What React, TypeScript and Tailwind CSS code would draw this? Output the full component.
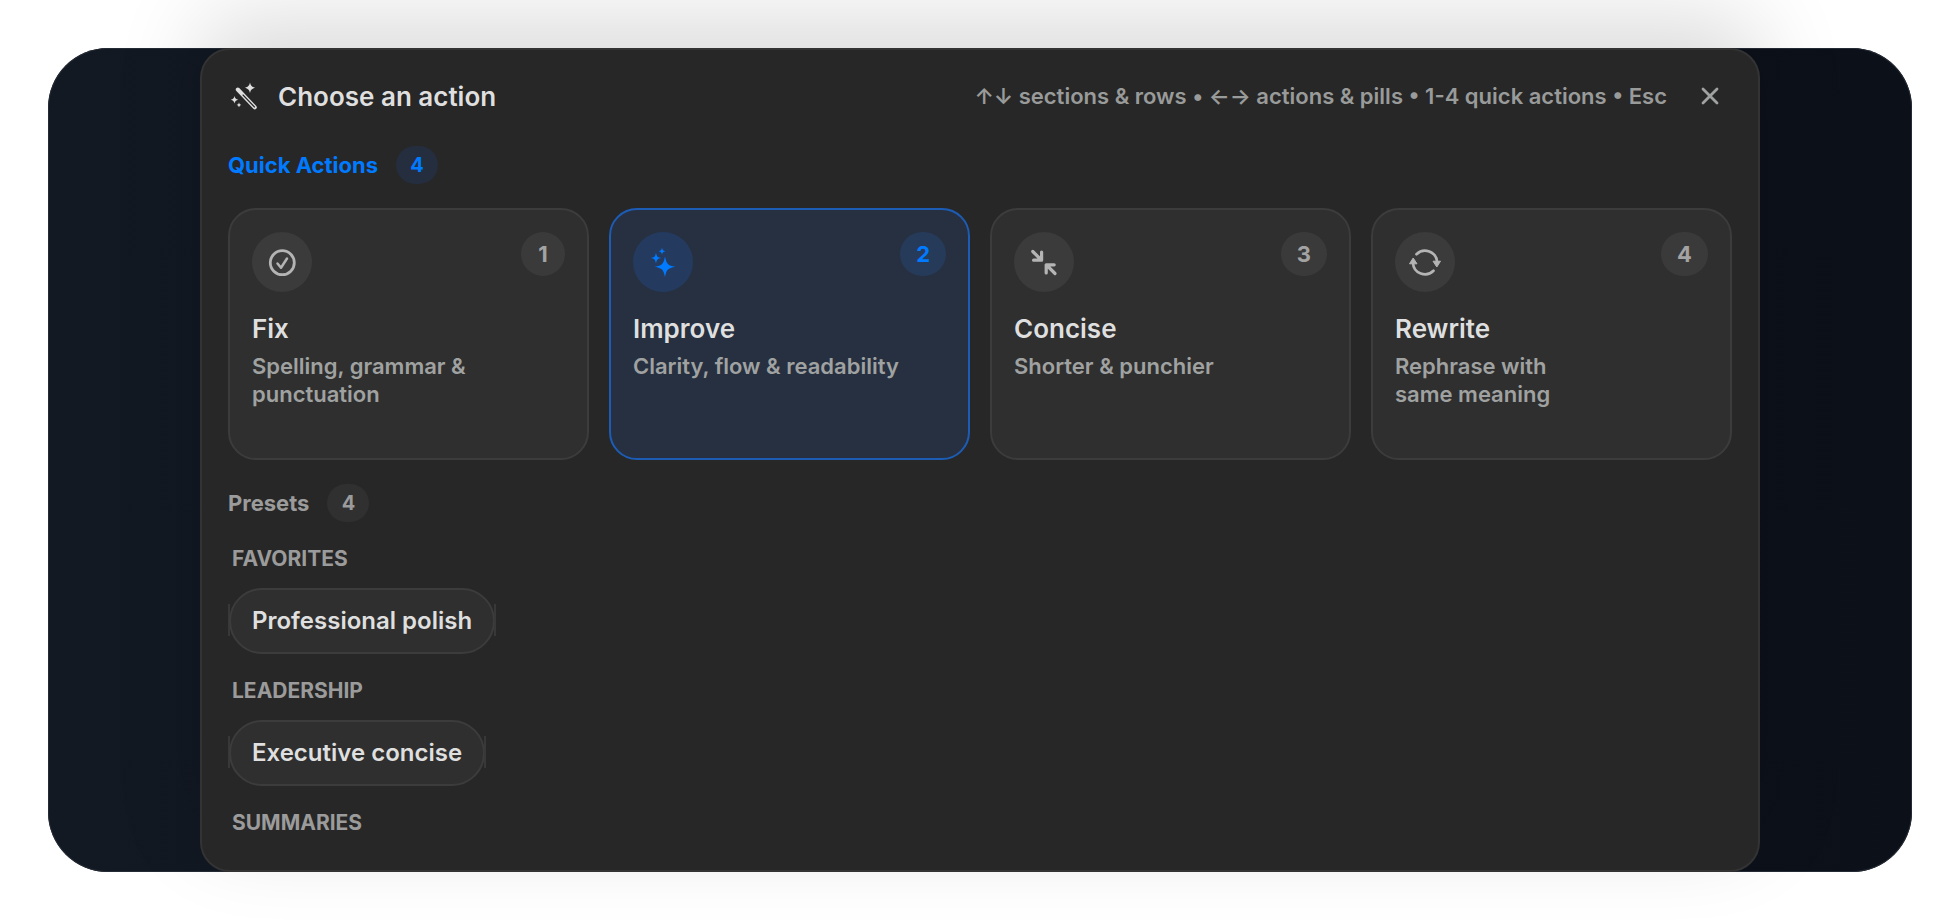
import React from 'react';

interface QuickAction {
  key: string;
  title: string;
  description: React.ReactNode;
  icon: React.ReactNode;
}

interface PresetGroup {
  name: string;
  presets: string[];
}

/* ICONS */
function WandIcon() {
  return (
    <svg className="w-8 h-8" viewBox="0 0 32 32" fill="currentColor" aria-hidden="true">
      <path d="M22 2.500c.9 3.500 1.900 4.400 5.300 5.300-3.400.9-4.400 1.800-5.300 5.300-.9-3.500-1.900-4.400-5.300-5.300 3.400-.9 4.400-1.800 5.300-5.300Z" />
      <path d="M6.500 16c.6 2.500 1.300 3.200 3.800 3.800-2.500.6-3.200 1.300-3.800 3.800-.6-2.500-1.300-3.200-3.800-3.800 2.500-.6 3.200-1.300 3.800-3.800Z" />
      <path d="M11 22.500c.5 1.600.9 2 2.400 2.400-1.500.5-1.900.8-2.400 2.400-.5-1.600-.9-1.900-2.400-2.400 1.500-.4 1.900-.8 2.400-2.400Z" />
      <path d="M9.800 9.500 26.800 27.300" fill="none" stroke="currentColor" strokeWidth="4" strokeLinecap="round" />
      <path d="M15 15 26.500 27" fill="none" stroke="#272727" strokeWidth="1.100" strokeLinecap="round" />
    </svg>
  );
}

function CloseIcon() {
  return (
    <svg className="w-[18px] h-[18px]" viewBox="0 0 18 18" fill="none" stroke="currentColor" strokeWidth="2.800" strokeLinecap="round" aria-hidden="true">
      <path d="m2 2 14 14M16 2 2 16" />
    </svg>
  );
}

function CheckIcon() {
  return (
    <svg className="w-8 h-8" viewBox="0 0 32 32" fill="none" stroke="currentColor" strokeLinecap="round" strokeLinejoin="round" aria-hidden="true">
      <circle cx="16.300" cy="16.700" r="12" strokeWidth="2.800" />
      <path d="m11.500 17.500 3.500 4.300 6-9.300" strokeWidth="2.500" />
    </svg>
  );
}

function SparklesIcon() {
  return (
    <svg className="w-8 h-8" viewBox="0 0 32 32" fill="currentColor" aria-hidden="true">
      <path d="M18 10.500c1.600 7.700 2.800 8.900 10.300 10.300C20.800 22.300 19.600 23.400 18 31c-1.600-7.600-2.800-8.700-10.300-10.200C15.200 19.400 16.400 18.200 18 10.500Z" />
      <path d="M9 6.800c.9 4 1.500 4.600 5.200 5.300-3.700.7-4.300 1.300-5.200 5.300-.9-4-1.500-4.600-5.200-5.300 3.700-.7 4.300-1.300 5.200-5.300Z" />
      <path d="M15 1.800c.6 2.500 1 2.900 3.300 3.400-2.300.5-2.700.9-3.300 3.400-.6-2.500-1-2.900-3.300-3.400 2.300-.5 2.700-.9 3.300-3.400Z" />
    </svg>
  );
}

function CollapseIcon() {
  return (
    <svg className="w-8 h-8" viewBox="0 0 32 32" fill="none" stroke="currentColor" strokeWidth="3.200" strokeLinecap="round" strokeLinejoin="round" aria-hidden="true">
      <path d="m4.800 5.500 8.500 8.500M13.600 6v8.200H5.600" />
      <path d="m27 27.500-8.500-8.500M18.200 27v-8.200h8" />
    </svg>
  );
}

function CycleIcon() {
  return (
    <svg className="w-8 h-8" viewBox="0 0 32 32" fill="none" aria-hidden="true">
      <path d="M7.500 8.200A12 12 0 0 1 28 16" stroke="currentColor" strokeWidth="2.700" strokeLinecap="round" />
      <path d="M24.500 24.800A12 12 0 0 1 4 17" stroke="currentColor" strokeWidth="2.700" strokeLinecap="round" />
      <path d="M24 15.200h7.500L27.800 21ZM.5 17.800H8L4.200 12Z" fill="currentColor" stroke="currentColor" strokeLinejoin="round" />
    </svg>
  );
}

const quickActions: QuickAction[] = [
  { key: '1', title: 'Fix', description: <>Spelling, grammar &amp;<br />punctuation</>, icon: <CheckIcon /> },
  { key: '2', title: 'Improve', description: <>Clarity, flow &amp; readability</>, icon: <SparklesIcon /> },
  { key: '3', title: 'Concise', description: <>Shorter &amp; punchier</>, icon: <CollapseIcon /> },
  { key: '4', title: 'Rewrite', description: <>Rephrase with<br />same meaning</>, icon: <CycleIcon /> },
];

const presetGroups: PresetGroup[] = [
  { name: 'FAVORITES', presets: ['Professional polish'] },
  { name: 'LEADERSHIP', presets: ['Executive concise'] },
  { name: 'SUMMARIES', presets: [] },
];

function SectionHeading({ label, count, active }: { label: string; count: number; active?: boolean }) {
  return (
    <div className={`flex items-center gap-[18px] h-[38px] text-[22px] ${active ? 'text-[#007aff]' : 'text-[#9b9b9b]'}`}>
      <h2 className="font-bold">{label}</h2>
      <span
        className={`flex items-center justify-center min-w-[42px] h-[38px] rounded-full text-[20px] font-bold ${
          active ? 'bg-[#252e3f]' : 'bg-[#303030]'
        }`}
      >
        {count}
      </span>
    </div>
  );
}

function ActionCard({ action, active }: { action: QuickAction; active: boolean }) {
  return (
    <button
      type="button"
      className={`flex flex-col min-h-[252px] p-[22px] rounded-[28px] border-2 text-left ${
        active ? 'bg-[#263040] border-[#1d5cb5]' : 'bg-[#2f2f2f] border-[#3c3c3c]'
      }`}
    >
      <span className="flex items-start justify-between w-full">
        <span
          className={`flex items-center justify-center w-[60px] h-[60px] rounded-full ${
            active ? 'bg-[#243b5f] text-[#007aff]' : 'bg-[#3b3b3b] text-[#b4b4b4]'
          }`}
        >
          {action.icon}
        </span>
        <span
          className={`flex items-center justify-center px-4 min-w-[44px] h-[44px] rounded-full text-[22px] font-bold ${
            active ? 'bg-[#263a5a] text-[#007aff]' : 'bg-[#3a3a3a] text-[#a3a3a3]'
          }`}
        >
          {action.key}
        </span>
      </span>
      <span className="mt-[21px] text-[26px] leading-8 font-semibold text-[#dfdfdf]">{action.title}</span>
      <span className="mt-[7px] text-[22px] leading-7 font-semibold text-[#a0a2a1]">{action.description}</span>
    </button>
  );
}

function PresetPill({ label }: { label: string }) {
  return (
    <button
      type="button"
      className="relative h-[66px] px-6 text-[24px] font-semibold text-[#dfdfdf] before:absolute before:left-0 before:top-4 before:h-8 before:w-0.5 before:bg-[#383838] after:absolute after:right-0 after:top-4 after:h-8 after:w-0.5 after:bg-[#383838]"
    >
      <span className="absolute inset-x-px inset-y-0 rounded-full border-2 border-[#3c3c3c] bg-[#2f2f2f]" />
      <span className="relative">{label}</span>
    </button>
  );
}

export default function App() {
  const selected = '2';

  return (
    <main className="p-12 bg-white font-['Inter','Liberation_Sans',sans-serif]">
      <div className="rounded-[60px] bg-gradient-to-r from-[#121923] to-[#0c1019] shadow-[inset_0_0_0_1px_#252b35]">
        <section
          role="dialog"
          aria-label="Choose an action"
          className="max-w-[1560px] mx-auto px-[26px] pt-[22px] pb-[34px] rounded-[30px] border-2 border-[#333333] bg-[#272727] shadow-[0_-32px_88px_rgba(0,0,0,0.14)]"
        >
          {/* HEADER */}
          <header className="flex items-center h-12 text-[#dfdfdf]">
            <WandIcon />
            <h1 className="ml-[18px] text-[26px] font-semibold">Choose an action</h1>
            <p className="ml-auto text-[22px] font-semibold text-[#999b9a]">
              ↑↓ sections &amp; rows • ←→ actions &amp; pills • 1-4 quick actions • Esc
            </p>
            <button type="button" aria-label="Close" className="flex items-center justify-center w-11 h-11 ml-[21px] text-[#a0a2a1]">
              <CloseIcon />
            </button>
          </header>

          {/* QUICK ACTIONS */}
          <div className="mt-[26px]">
            <SectionHeading label="Quick Actions" count={4} active />
            <div className="grid grid-cols-4 gap-5 mt-6">
              {quickActions.map((action) => (
                <ActionCard key={action.key} action={action} active={action.key === selected} />
              ))}
            </div>
          </div>

          {/* PRESETS */}
          <div className="mt-6">
            <SectionHeading label="Presets" count={4} />
            {presetGroups.map((group) => (
              <div key={group.name} className="mt-6">
                <h3 className="ml-1 text-[21px] leading-[26px] font-bold text-[#9b9b9b]">{group.name}</h3>
                {group.presets.length > 0 && (
                  <div className="flex flex-wrap gap-4 mt-4">
                    {group.presets.map((preset) => (
                      <PresetPill key={preset} label={preset} />
                    ))}
                  </div>
                )}
              </div>
            ))}
          </div>
        </section>
      </div>
    </main>
  );
}
